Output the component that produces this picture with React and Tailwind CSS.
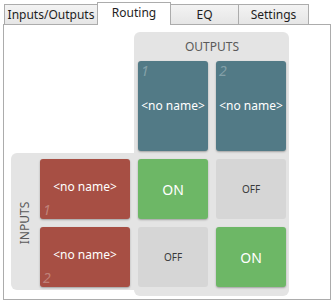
import React from "react";

const tabs = [
  { label: "Inputs/Outputs", w: "w-[94px]" },
  { label: "Routing", w: "w-[74px]", active: true },
  { label: "EQ", w: "w-[69px]" },
  { label: "Settings", w: "w-[71px]" },
];

function Tab({ label, w, active }) {
  if (active) {
    return (
      <div
        className={`${w} h-[23px] -mb-px -ml-px relative z-10 bg-white border border-b-0 border-[#acacac] flex items-center justify-center text-[12px] text-[#1e1e1e] pb-[3px]`}
      >
        {label}
      </div>
    );
  }
  return (
    <div
      className={`${w} h-[20px] -ml-px first:ml-0 border border-b-0 border-[#acacac] bg-gradient-to-b from-[#f3f3f3] to-[#e6e6e6] flex items-center justify-center text-[12px] text-[#1e1e1e]`}
    >
      {label}
    </div>
  );
}

function OutputCard({ n, col }) {
  return (
    <div
      className={`${col} row-start-2 row-end-3 relative rounded-[3px] bg-[#527a86] shadow-[0_1px_2px_rgba(0,0,0,0.3)] flex items-center justify-center text-white text-[12px]`}
    >
      <span className="absolute left-[3px] top-[-1px] italic text-[14px] text-white/30">{n}</span>
      &lt;no name&gt;
    </div>
  );
}

function InputCard({ n, row }) {
  return (
    <div
      className={`col-start-2 col-end-3 ${row} relative rounded-[3px] bg-[#a74f44] shadow-[0_1px_2px_rgba(0,0,0,0.3)] flex items-center justify-center text-white text-[12px] pb-[4px]`}
    >
      <span className="absolute left-[3px] bottom-[-1px] italic text-[14px] text-white/30">{n}</span>
      &lt;no name&gt;
    </div>
  );
}

function Cell({ on, col, row }) {
  return on ? (
    <div
      className={`${col} ${row} rounded-[3px] bg-[#6db766] shadow-[0_1px_2px_rgba(0,0,0,0.3)] flex items-center justify-center text-white text-[14px]`}
    >
      ON
    </div>
  ) : (
    <div
      className={`${col} ${row} rounded-[3px] bg-[#d6d6d6] flex items-center justify-center text-[#3a3a3a] text-[10px]`}
    >
      OFF
    </div>
  );
}

export default function App() {
  return (
    <div className="w-[335px] h-[303px] bg-white pt-[2px] pl-[3px] font-['Segoe_UI','Noto_Sans',sans-serif]">
      <div className="flex items-end h-[22px] pl-px">
        {tabs.map((t) => (
          <Tab key={t.label} {...t} />
        ))}
      </div>
      <div className="w-[328px] h-[276px] border border-[#acacac] pl-[7px] pt-[7px]">
        <div className="grid grid-cols-[29px_90px_4px_4px_70px_8px_70px_3px] grid-rows-[29px_90px_2px_6px_60px_8px_60px_3px_6px]">
          <div className="col-start-4 col-end-9 row-start-1 row-end-10 rounded-[6px] bg-[#e4e4e4]" />
          <div className="col-start-1 col-end-9 row-start-4 row-end-9 rounded-[6px] bg-[#e4e4e4]" />

          <div className="col-start-5 col-end-8 row-start-1 row-end-2 flex items-center justify-center text-[12px] text-[#5a5a5a] pt-[1px]">
            OUTPUTS
          </div>
          <div className="col-start-1 col-end-2 row-start-5 row-end-8 flex items-center justify-center">
            <span className="-rotate-90 whitespace-nowrap text-[12px] text-[#5a5a5a]">INPUTS</span>
          </div>

          <OutputCard n="1" col="col-start-5 col-end-6" />
          <OutputCard n="2" col="col-start-7 col-end-8" />

          <InputCard n="1" row="row-start-5 row-end-6" />
          <InputCard n="2" row="row-start-7 row-end-8" />

          <Cell on col="col-start-5 col-end-6" row="row-start-5 row-end-6" />
          <Cell col="col-start-7 col-end-8" row="row-start-5 row-end-6" />
          <Cell col="col-start-5 col-end-6" row="row-start-7 row-end-8" />
          <Cell on col="col-start-7 col-end-8" row="row-start-7 row-end-8" />
        </div>
      </div>
    </div>
  );
}
